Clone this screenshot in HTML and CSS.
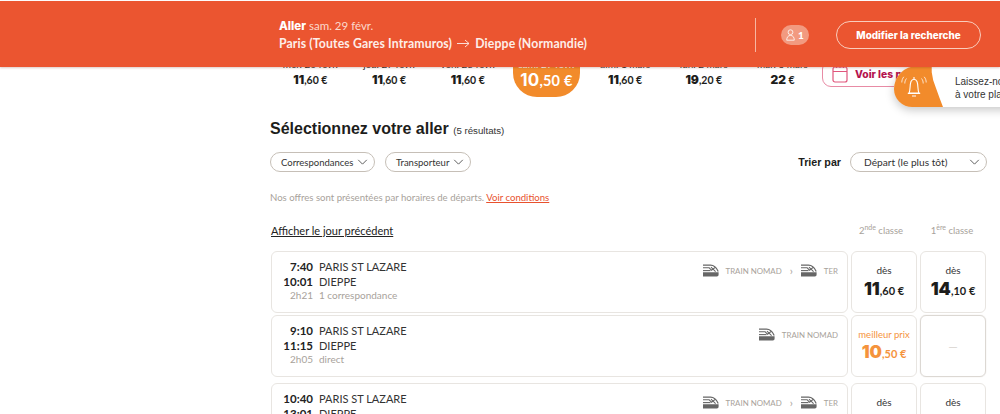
FILE: index.html
```html
<!DOCTYPE html>
<html lang="fr">
<head>
<meta charset="utf-8">
<title>Sélectionnez votre aller</title>
<link rel="stylesheet" href="styles.css">
</head>
<body>
<svg class="defs" width="0" height="0" aria-hidden="true">
  <symbol id="train" viewBox="0 0 16 13">
    <path d="M0 1.2H7.5C10.5 1.2 13.6 4 15.2 7.4" fill="none" stroke="currentColor" stroke-width="1.2"/>
    <path d="M0 3.8H6.2L8.6 6.3L12.2 3.4" fill="none" stroke="currentColor" stroke-width="1.1"/>
    <path d="M8 3.2L12.6 7.6" fill="none" stroke="currentColor" stroke-width="1.1"/>
    <path d="M0 6.6H7.5" stroke="currentColor" stroke-width="1.1"/>
    <path d="M0 8.2H15.6V10.4C15.6 11.6 15 12.4 13.8 12.4H0Z" fill="currentColor"/>
  </symbol>
  <symbol id="chev" viewBox="0 0 12 7">
    <path d="M1 1L6 6L11 1" fill="none" stroke="currentColor" stroke-width="1.1"/>
  </symbol>
</svg>

<header class="topbar">
  <div class="summary">
    <div class="summary-date"><strong>Aller</strong> sam. 29 févr.</div>
    <div class="summary-route">Paris (Toutes Gares Intramuros)
      <svg class="arrow" width="13" height="9" viewBox="0 0 13 9"><path d="M0 4.5H12M8 1L12 4.5L8 8" fill="none" stroke="currentColor" stroke-width="0.9"/></svg>
      Dieppe (Normandie)</div>
  </div>
  <div class="top-actions">
    <span class="pax">
      <svg width="9" height="12" viewBox="0 0 9 12"><circle cx="4.5" cy="3.2" r="2.4" fill="none" stroke="currentColor" stroke-width="0.8"/><path d="M0.7 11.2C0.7 8.2 2.2 6.4 4.5 6.4S8.3 8.2 8.3 11.2Z" fill="none" stroke="currentColor" stroke-width="0.8"/></svg>
      1</span>
    <button class="modify">Modifier la recherche</button>
  </div>
</header>

<div class="toast">
  <div class="toast-icon">
    <svg width="26" height="24" viewBox="0 0 26 24"><path d="M8 18C9.6 15 8.6 10 10 6.5C10.7 4.9 11.8 4.2 13 4.2S15.3 4.9 16 6.5C17.4 10 16.4 15 18 18ZM6.8 18.4H19.2M11 21H15M13 2V4.2" fill="none" stroke="#fff" stroke-width="1.1"/><path d="M5.5 3.5C4.3 5 3.8 6.5 3.8 8.5M2.8 1.8C1.4 3.5.8 5.5.8 7.5M20.5 3.5C21.7 5 22.2 6.5 22.2 8.5M23.2 1.8C24.6 3.5 25.2 5.5 25.2 7.5" fill="none" stroke="#fff" stroke-width="0.9" opacity=".85"/></svg>
  </div>
  <p class="toast-text">Laissez-nous vous prévenir<br>à votre place</p>
</div>

<main class="page">
  <nav class="dates">
    <div class="day"><span class="day-label">mer. 26 févr.</span><span class="day-price"><b>11</b>,60 €</span></div>
    <div class="day"><span class="day-label">jeu. 27 févr.</span><span class="day-price"><b>11</b>,60 €</span></div>
    <div class="day"><span class="day-label">ven. 28 févr.</span><span class="day-price"><b>11</b>,60 €</span></div>
    <div class="day day-active"><span class="day-label">sam. 29 févr.</span><span class="day-price"><b>10</b>,50 €</span></div>
    <div class="day"><span class="day-label">dim. 1 mars</span><span class="day-price"><b>11</b>,60 €</span></div>
    <div class="day"><span class="day-label">lun. 2 mars</span><span class="day-price"><b>19</b>,20 €</span></div>
    <div class="day"><span class="day-label">mar. 3 mars</span><span class="day-price"><b>22</b> €</span></div>
    <a class="calendar">
      <svg width="16" height="19" viewBox="0 0 16 19"><rect x="1" y="3" width="14" height="15" rx="2" fill="none" stroke="#e0567c" stroke-width="1.2"/><path d="M1 7.5H15M4.5 1V4M8 1V4M11.5 1V4" stroke="#e0567c" stroke-width="1.2"/></svg>
      <span>Voir les prix</span>
    </a>
  </nav>

  <h1 class="title">Sélectionnez votre aller <small>(5 résultats)</small></h1>

  <div class="filters">
    <button class="pill">Correspondances <svg width="11" height="6"><use href="#chev"/></svg></button>
    <button class="pill">Transporteur <svg width="11" height="6"><use href="#chev"/></svg></button>
    <div class="sort">
      <span class="sort-label">Trier par</span>
      <button class="pill pill-sort">Départ (le plus tôt) <svg width="11" height="6"><use href="#chev"/></svg></button>
    </div>
  </div>

  <p class="notice">Nos offres sont présentées par horaires de départs. <a>Voir conditions</a></p>

  <div class="list-head">
    <a class="prev">Afficher le jour précédent</a>
    <span class="class-head">2<sup>nde</sup> classe</span>
    <span class="class-head">1<sup>ère</sup> classe</span>
  </div>

  <section class="row">
    <div class="trip">
      <div class="times"><b>7:40</b><b>10:01</b><span>2h21</span></div>
      <div class="stops"><div>PARIS ST LAZARE</div><div>DIEPPE</div><span>1 correspondance</span></div>
      <div class="carriers"><svg class="tr"><use href="#train"/></svg><span>TRAIN NOMAD</span><i>›</i><svg class="tr"><use href="#train"/></svg><span>TER</span></div>
    </div>
    <div class="fare"><span class="from">dès</span><span class="amount"><b>11</b>,60 €</span></div>
    <div class="fare"><span class="from">dès</span><span class="amount"><b>14</b>,10 €</span></div>
  </section>

  <section class="row">
    <div class="trip">
      <div class="times"><b>9:10</b><b>11:15</b><span>2h05</span></div>
      <div class="stops"><div>PARIS ST LAZARE</div><div>DIEPPE</div><span>direct</span></div>
      <div class="carriers"><svg class="tr"><use href="#train"/></svg><span>TRAIN NOMAD</span></div>
    </div>
    <div class="fare fare-best"><span class="from">meilleur prix</span><span class="amount"><b>10</b>,50 €</span></div>
    <div class="fare fare-none">—</div>
  </section>

  <section class="row row-gap">
    <div class="trip">
      <div class="times"><b>10:40</b><b>13:01</b><span>2h21</span></div>
      <div class="stops"><div>PARIS ST LAZARE</div><div>DIEPPE</div><span>1 correspondance</span></div>
      <div class="carriers"><svg class="tr"><use href="#train"/></svg><span>TRAIN NOMAD</span><i>›</i><svg class="tr"><use href="#train"/></svg><span>TER</span></div>
    </div>
    <div class="fare"><span class="from">dès</span><span class="amount"><b>11</b>,60 €</span></div>
    <div class="fare"><span class="from">dès</span><span class="amount"><b>14</b>,10 €</span></div>
  </section>
</main>
</body>
</html>
```
FILE: styles.css
```css
* { box-sizing: border-box; }
html, body { height: 414px; overflow: hidden; }
body { margin: 0; background: #fff; color: #1d1d1b; font-family: Lato, "Open Sans", sans-serif; position: relative; }
.defs { position: absolute; }
button { font-family: inherit; background: none; cursor: pointer; }

.topbar { position: absolute; top: 1px; left: 0; width: 1000px; height: 66px; background: #eb5530; color: #fff; display: flex; align-items: flex-start; justify-content: space-between; padding: 17px 19px 0 279px; z-index: 3; box-shadow: 0 1px 2px rgba(120,40,20,.25); }
.summary-date { font-size: 11.5px; color: #fbd9cd; line-height: 16px; }
.summary-date strong { font-family: Inter, Lato, sans-serif; font-size: 11.5px; color: #fff; font-weight: 800; }
.summary-route { font-size: 12.25px; font-weight: 700; line-height: 18px; margin-top: 1px; color: #fdeee8; letter-spacing: .12px; }
.arrow { margin: 0 2px; }
.top-actions { display: flex; align-items: center; height: 34px; border-left: 1px solid #f6b7a2; padding-left: 25px; }
.pax { display: flex; align-items: center; gap: 3px; width: 28px; height: 20px; justify-content: center; border-radius: 10px; background: #f29a80; color: #fff; font-size: 10px; font-weight: 900; }
.modify { margin-left: 27px; width: 145px; height: 28px; border: 1px solid #f9cdbd; border-radius: 14px; color: #fff; font-family: Inter, Lato, sans-serif; font-size: 9.9px; font-weight: 800; padding: 0; white-space: nowrap; }

.toast { position: absolute; left: 894px; top: 66px; width: 140px; height: 41px; display: flex; background: #fff; border-radius: 23px 0 0 18px; box-shadow: 0 3px 10px rgba(0,0,0,.22); z-index: 2; overflow: hidden; }
.toast-icon { width: 49px; background: #f28b2b; display: flex; align-items: center; justify-content: center; padding: 1px 10px 0 0; clip-path: polygon(0 0, 77% 0, 77% 15%, 80% 35%, 86% 55%, 93% 78%, 100% 100%, 0 100%); flex: none; }
.toast-text { margin: 10px 0 0 0; padding-left: 12px; font: 10px/12.5px "Liberation Sans", Arial, sans-serif; white-space: nowrap; color: #333; }

.page { width: 717px; margin-left: 270px; padding-top: 58px; }
.dates { display: flex; height: 40px; position: relative; padding-left: 1px; }
.day { width: 78.7px; flex: none; text-align: center; display: flex; flex-direction: column; align-items: center; height: 39px; }
.day-label { font-size: 10px; line-height: 12px; color: #333; white-space: nowrap; }
.day-price { font-size: 10.5px; font-weight: 700; line-height: 14px; margin-top: 3px; }
.day-price b, .amount b { font-family: Inter, Lato, sans-serif; font-weight: 900; }
.day-price b { font-size: 12px; }
.day-active { width: 67px; margin: 0 5.85px; background: #f28b2b; color: #fff; border-radius: 0 0 24px 24px; height: 39px; }
.day-active .day-label { color: #fff; }
.day-active .day-price { font-size: 14.5px; line-height: 20px; margin-top: 0; letter-spacing: .2px; }
.day-active .day-price b { font-size: 17px; font-weight: 700; }
.calendar { display: flex; position: absolute; left: 552px; top: 2px; width: 100px; height: 27px; align-items: center; gap: 7px; padding-left: 9px; border: 1px solid #e88ba5; border-radius: 9px; color: #b5134e; font-family: Inter, Lato, sans-serif; font-size: 10.3px; font-weight: 800; white-space: nowrap; overflow: hidden; }

.title { font: 700 16px/20px "Liberation Sans", Arial, sans-serif; margin: 21px 0 0; }
.title small { font-size: 9.7px; font-weight: 400; color: #333; }

.filters { display: flex; align-items: center; gap: 9.5px; margin-top: 11px; }
.pill { height: 20px; border: 1px solid #c6bfb7; border-radius: 10px; color: #333; font-size: 9.5px; padding: 0 6px 0 10px; display: flex; align-items: center; gap: 4px; white-space: nowrap; }
.pill svg { color: #555; flex: none; }
.sort { margin-left: auto; display: flex; align-items: center; gap: 9px; }
.sort-label { font: 700 10.7px "Liberation Sans", Arial, sans-serif; }
.pill-sort { width: 137px; justify-content: space-between; padding: 0 6px 0 13px; font-size: 10.2px; }

.notice { margin: 19px 0 0; font-size: 9.6px; line-height: 14px; color: #a8a29b; }
.notice a { color: #e8512e; text-decoration: underline; }

.list-head { display: flex; align-items: center; margin-top: 18px; height: 15px; }
.prev { font-size: 11px; font-weight: 400; color: #222; text-decoration: underline; margin-left: 1px; margin-right: auto; }
.class-head { width: 68px; text-align: center; font-size: 9.5px; color: #a8a29b; white-space: nowrap; }
.class-head + .class-head { margin-left: 3px; margin-right: 1px; }
.class-head sup { font-size: 7px; line-height: 0; }

.row { display: flex; gap: 3px; margin-top: 2px; height: 62px; padding-left: 1px; }
.list-head + .row { margin-top: 13px; }
.row-gap { margin-top: 6px; }
.trip { width: 577px; border: 1px solid #e8e5e1; border-radius: 6px; display: flex; padding: 8px 9px 0 0; }
.times { width: 41px; flex: none; display: flex; flex-direction: column; align-items: flex-end; }
.times b { font-size: 11.5px; font-weight: 700; line-height: 14.5px; color: #222; }
.times span, .stops span { font-size: 10px; line-height: 14px; margin-top: -1px; color: #a8a29b; }
.stops { margin-left: 6px; font-size: 11px; line-height: 14.5px; color: #333; display: flex; flex-direction: column; }
.carriers { margin-left: auto; display: flex; align-items: center; height: 15px; margin-top: 3px; font-size: 7.9px; color: #a8a29b; }
.carriers span { margin-left: 7px; margin-top: 0; }
.carriers i { font-style: normal; margin: 0 8px; font-size: 11px; }
.tr { width: 16px; height: 13px; color: #666; }
.fare { width: 66px; height: 62px; border: 1px solid #e8e5e1; border-radius: 6px; display: flex; flex-direction: column; align-items: center; padding-top: 12px; }
.fare .from { font-size: 10px; line-height: 13px; color: #333; white-space: nowrap; }
.amount { font-size: 11px; font-weight: 700; margin-top: 2px; line-height: 20px; white-space: nowrap; }
.amount b { font-size: 17.5px; }
.fare-best, .fare-best .from { color: #f5933c; }
.fare-best .from { font-size: 9.5px; }
.fare-best .amount { margin-top: 1px; }
.fare-none { border-color: #dcd8d3; box-shadow: 0 0 1px #cfcac4; color: #d8d4cf; justify-content: center; padding-top: 0; font-size: 12px; }
```
